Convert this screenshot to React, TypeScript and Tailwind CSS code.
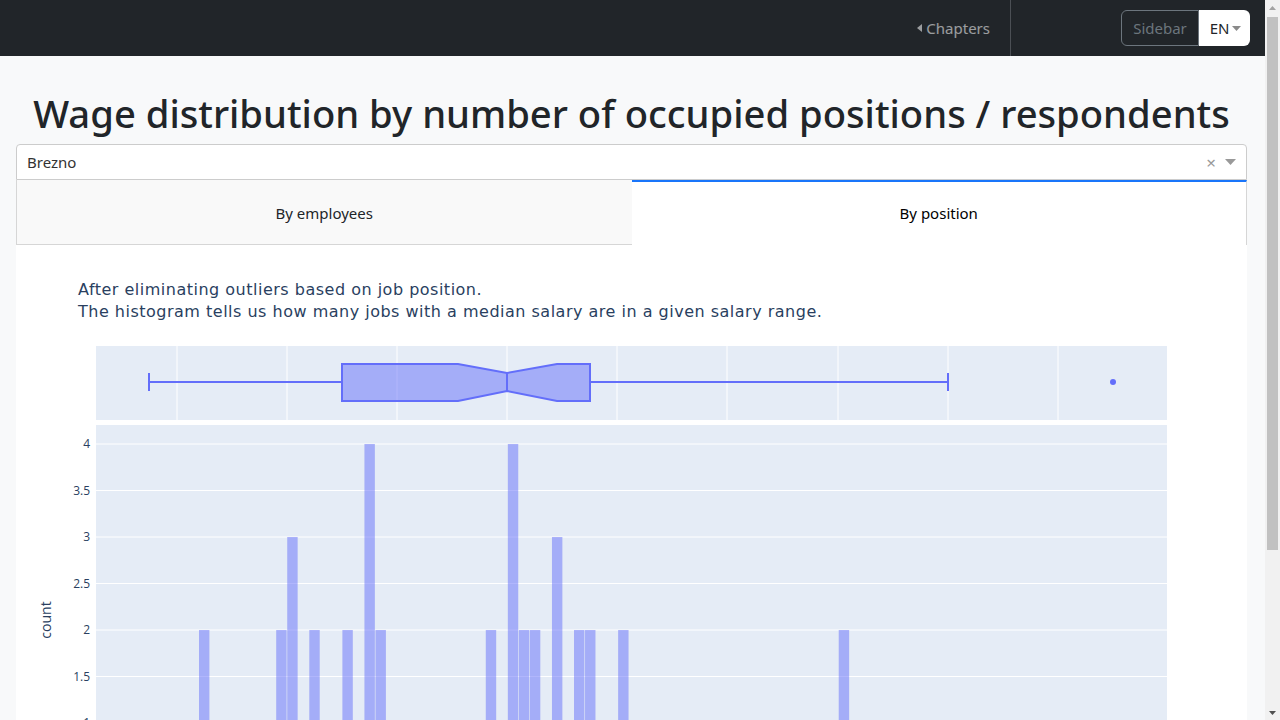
import React from "react";

const BIN = 11.03;
const bars: [number, number][] = [
  [-5, 1], [-2, 1], [0, 2], [3, 1], [5, 1], [7, 2], [8, 3], [10, 2], [11, 1], [13, 2], [15, 4], [16, 2],
  [19, 1], [22, 1], [24, 1], [26, 2], [27, 1], [28, 4], [29, 2], [30, 2], [31, 1], [32, 3], [34, 2], [35, 2],
  [36, 1], [38, 2], [41, 1], [44, 1], [48, 1], [53, 1], [58, 2], [61, 1], [68, 1], [83, 1],
];

const gridX = [161, 271, 381, 491, 601, 711, 822, 932, 1042];
const yTicks = [
  { v: 4, l: "4" }, { v: 3.5, l: "3.5" }, { v: 3, l: "3" }, { v: 2.5, l: "2.5" }, { v: 2, l: "2" },
  { v: 1.5, l: "1.5" }, { v: 1, l: "1" }, { v: 0.5, l: "0.5" }, { v: 0, l: "0" },
];
const xLabels = ["600", "800", "1000", "1200", "1400", "1600", "1800", "2000", "2200"];

function y(c: number) {
  return 493 - 93 * c;
}

function Chart() {
  return (
    <svg width="1231" height="607" className="block" style={{ fontFamily: '"Open Sans", Verdana, Arial, sans-serif' }}>
      {/* box plot */}
      <rect x="80" y="23" width="1071" height="74" fill="#e5ecf6" />
      {gridX.map((gx) => (
        <line key={gx} x1={gx} x2={gx} y1="23" y2="97" stroke="#ffffff" strokeWidth="1" />
      ))}
      <line x1="133" x2="326" y1="59" y2="59" stroke="#636efa" strokeWidth="2" />
      <line x1="574" x2="932" y1="59" y2="59" stroke="#636efa" strokeWidth="2" />
      <line x1="133" x2="133" y1="50" y2="68" stroke="#636efa" strokeWidth="2" />
      <line x1="932" x2="932" y1="50" y2="68" stroke="#636efa" strokeWidth="2" />
      <path
        d="M326 41 L442 41 L491 50 L541 41 L574 41 L574 78 L541 78 L491 68 L442 78 L326 78 Z"
        fill="rgba(99,110,250,0.5)"
        stroke="#636efa"
        strokeWidth="2"
      />
      <line x1="491" x2="491" y1="50" y2="68" stroke="#636efa" strokeWidth="2" />
      <circle cx="1097" cy="59" r="3" fill="#636efa" />

      {/* histogram */}
      <rect x="80" y="102" width="1071" height="391" fill="#e5ecf6" />
      {yTicks.map((t) => (
        <g key={t.l}>
          {t.v > 0 && <line x1="80" x2="1151" y1={y(t.v)} y2={y(t.v)} stroke="#ffffff" strokeWidth="1" />}
          <text x="74" y={y(t.v) + 4} textAnchor="end" fontSize="12" fill="#2a3f5f">
            {t.l}
          </text>
        </g>
      ))}
      {bars.map(([k, c]) => (
        <rect key={k} x={183 + k * BIN} y={y(c)} width="10.4" height={93 * c} fill="#636efa" fillOpacity="0.5" />
      ))}
      <line x1="80" x2="1151" y1="493" y2="493" stroke="#ffffff" strokeWidth="2" />
      {gridX.map((gx, i) => (
        <text key={gx} x={gx} y="512" textAnchor="middle" fontSize="12" fill="#2a3f5f">
          {xLabels[i]}
        </text>
      ))}
      <text x="615" y="545" textAnchor="middle" fontSize="14" fill="#2a3f5f">
        median salary
      </text>
      <text x="35" y="297" textAnchor="middle" fontSize="14" fill="#2a3f5f" transform="rotate(-90 35 297)">
        count
      </text>
    </svg>
  );
}

function Scrollbar() {
  return (
    <div className="flex w-[15px] shrink-0 flex-col items-center bg-[#f1f1f1]">
      <div className="flex h-[15px] items-center justify-center">
        <svg width="7" height="4" viewBox="0 0 7 4">
          <path d="M0 4 L3.5 0 L7 4 Z" fill="#a3a3a3" />
        </svg>
      </div>
      <div className="mt-[2px] h-[533px] w-[11px] bg-[#c1c1c1]" />
      <div className="flex-1" />
      <div className="flex h-[15px] items-center justify-center">
        <svg width="7" height="4" viewBox="0 0 7 4">
          <path d="M0 0 L7 0 L3.5 4 Z" fill="#505050" />
        </svg>
      </div>
    </div>
  );
}

export default function App() {
  return (
    <div className="flex h-screen overflow-hidden bg-[#f8f9fa]" style={{ fontFamily: '"Noto Sans", "Open Sans", Arial, sans-serif' }}>
      <div className="min-w-0 flex-1 overflow-hidden">
        <nav className="flex h-14 items-stretch justify-end bg-[#212529] pr-[15px]">
          <a className="flex items-center gap-[4px] pr-5 text-[15px] text-white/55">
            <svg width="5" height="8" viewBox="0 0 5 8">
              <path d="M5 0 L0 4 L5 8 Z" fill="currentColor" />
            </svg>
            <span>Chapters</span>
          </a>
          <div className="w-px bg-[#4b4f54]" />
          <div className="w-[110px]" />
          <div className="flex items-center">
            <button className="h-9 w-[78px] rounded-l-[6px] border border-[#6c757d] text-[15px] text-[#6c757d]">Sidebar</button>
            <button className="flex h-9 w-[51px] items-center justify-center gap-[3px] rounded-r-[6px] bg-white pl-[2px] text-[15px] text-[#212529]">
              EN
              <svg width="9" height="5" viewBox="0 0 9 5">
                <path d="M0 0 L9 0 L4.5 5 Z" fill="#8a8a8a" />
              </svg>
            </button>
          </div>
        </nav>

        <div className="pl-4 pr-[18px]">
          <h1 className="mb-[7px] pt-[33px] text-center text-[38.2px] font-medium leading-[48px] text-[#212529]">
            Wage distribution by number of occupied positions / respondents
          </h1>
          <div className="flex h-[36px] items-center rounded-t-[4px] border border-[#cccccc] bg-white pl-[10px] pr-[10px] text-[15px] text-[#333333]">
            <span className="flex-1">Brezno</span>
            <span className="mr-[9px] text-[17px] leading-none text-[#999999]">×</span>
            <svg width="11" height="6" viewBox="0 0 11 6">
              <path d="M0 0 L11 0 L5.5 6 Z" fill="#999999" />
            </svg>
          </div>
          <div className="grid h-[65px] grid-cols-2">
            <div className="flex items-center justify-center border-b border-l border-[#d6d6d6] bg-[#f9f9f9] pt-[2px] text-[15px] text-[#212529]">
              By employees
            </div>
            <div className="flex items-center justify-center border-r border-t-2 border-r-[#d6d6d6] border-t-[#1975fa] bg-white text-[15px] text-[#000000]">
              By position
            </div>
          </div>
          <div className="bg-white pb-4">
            <div className="pl-[62px] pt-[34px] font-['DejaVu_Sans'] text-[16px] leading-[22px] tracking-[0.5px] text-[#2a3f5f]">
              <p>After eliminating outliers based on job position.</p>
              <p>The histogram tells us how many jobs with a median salary are in a given salary range.</p>
            </div>
            <Chart />
          </div>
        </div>
      </div>
      <Scrollbar />
    </div>
  );
}
